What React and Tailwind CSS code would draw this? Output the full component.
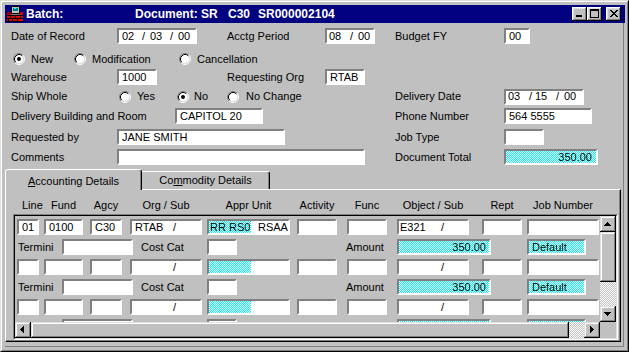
import React from "react";

const RAISED =
  "bg-[#c0c0c0] shadow-[inset_-1px_-1px_0_#000,inset_1px_1px_0_#dfdfdf,inset_-2px_-2px_0_#808080,inset_2px_2px_0_#fff]";
const CAPBTN =
  "bg-[#c0c0c0] shadow-[inset_-1px_-1px_0_#000,inset_1px_1px_0_#fff,inset_-2px_-2px_0_#808080,inset_2px_2px_0_#dfdfdf]";
const DITHER =
  "bg-[image:repeating-conic-gradient(#00ffff_0_25%,#ffffff_0_50%)] bg-[length:2px_2px] bg-fixed";
const TRACK =
  "bg-[image:repeating-conic-gradient(#c0c0c0_0_25%,#ffffff_0_50%)] bg-[length:2px_2px] bg-fixed";

function Field({ className = "", inner = "", dither = false, children }) {
  return (
    <div
      className={`shrink-0 h-[16px] border-2 border-t-[#808080] border-l-[#808080] border-r-white border-b-white overflow-hidden ${
        dither ? DITHER : "bg-white"
      } ${className}`}
    >
      <div className={`flex items-center w-full h-full whitespace-pre ${inner}`}>{children}</div>
    </div>
  );
}

function Radio({ checked }) {
  return (
    <svg width="12" height="12" viewBox="0 0 12 12" className="shrink-0">
      <circle cx="6" cy="6" r="4.5" fill="#fff" />
      <path d="M2.11 9.89A5.5 5.5 0 0 1 9.89 2.11" fill="none" stroke="#808080" />
      <path d="M9.89 2.11A5.5 5.5 0 0 1 2.11 9.89" fill="none" stroke="#fff" />
      <path d="M2.82 9.18A4.5 4.5 0 0 1 9.18 2.82" fill="none" stroke="#000" />
      <path d="M9.18 2.82A4.5 4.5 0 0 1 2.82 9.18" fill="none" stroke="#dfdfdf" />
      {checked && <circle cx="6" cy="6" r="2" fill="#000" />}
    </svg>
  );
}

function Arrow({ dir }) {
  const r = {
    up: [[7, 6, 1, 1], [6, 7, 3, 1], [5, 8, 5, 1], [4, 9, 7, 1]],
    down: [[4, 6, 7, 1], [5, 7, 5, 1], [6, 8, 3, 1], [7, 9, 1, 1]],
    left: [[5, 7, 1, 1], [6, 6, 1, 3], [7, 5, 1, 5], [8, 4, 1, 7]],
    right: [[6, 4, 1, 7], [7, 5, 1, 5], [8, 6, 1, 3], [9, 7, 1, 1]],
  }[dir];
  return (
    <svg width="16" height="16" viewBox="0 0 16 16" shapeRendering="crispEdges">
      {r.map(([x, y, w, h], i) => (
        <rect key={i} x={x} y={y} width={w} height={h} fill="#000" />
      ))}
    </svg>
  );
}

function ScrollBtn({ dir }) {
  return (
    <div className={`w-[16px] h-[16px] shrink-0 ${RAISED}`}>
      <Arrow dir={dir} />
    </div>
  );
}

function AppIcon() {
  return (
    <svg width="16" height="16" viewBox="0 0 16 16" shapeRendering="crispEdges">
      <rect x="0" y="6" width="16" height="10" fill="#e00000" />
      <rect x="0" y="6" width="5" height="2" fill="#800000" />
      <rect x="0" y="9" width="16" height="1" fill="#000" />
      <rect x="0" y="12" width="16" height="1" fill="#000" />
      <rect x="0" y="15" width="16" height="1" fill="#000" />
      <rect x="3" y="10" width="1" height="2" fill="#000" />
      <rect x="8" y="10" width="1" height="2" fill="#000" />
      <rect x="13" y="10" width="1" height="2" fill="#000" />
      <rect x="5" y="13" width="1" height="2" fill="#000" />
      <rect x="10" y="13" width="1" height="2" fill="#000" />
      <rect x="1" y="13" width="1" height="2" fill="#000" />
      <rect x="4" y="0" width="9" height="8" fill="#000" />
      <rect x="5" y="1" width="7" height="6" fill="#c0c0c0" />
      <rect x="6" y="2" width="5" height="3" fill="#008080" />
      <rect x="7" y="2" width="2" height="1" fill="#00ffff" />
      <rect x="5" y="8" width="7" height="1" fill="#808080" />
    </svg>
  );
}

function CloseGlyph() {
  const rows = [
    [[0, 2], [6, 2]],
    [[1, 2], [5, 2]],
    [[2, 4]],
    [[3, 2]],
    [[2, 4]],
    [[1, 2], [5, 2]],
    [[0, 2], [6, 2]],
  ];
  return (
    <svg width="8" height="7" viewBox="0 0 8 7" shapeRendering="crispEdges">
      {rows.map((segs, y) =>
        segs.map(([x, w], i) => (
          <rect key={`${y}-${i}`} x={x} y={y} width={w} height="1" fill="#000" />
        ))
      )}
    </svg>
  );
}

function TitleBar() {
  return (
    <div className="h-[18px] shrink-0 bg-[#000080] flex items-center text-white font-bold text-[12px] leading-[14px]">
      <div className="w-[21px] pl-[2px] flex items-center shrink-0">
        <AppIcon />
      </div>
      <span className="w-[109px] shrink-0">Batch:</span>
      <span className="w-[93px] shrink-0">Document: SR</span>
      <span className="w-[30px] shrink-0">C30</span>
      <span>SR000002104</span>
      <div className="ml-auto flex items-center mr-[4px]">
        <div className={`w-[15px] h-[14px] relative ${CAPBTN}`}>
          <div className="absolute left-[4px] top-[8px] w-[6px] h-[2px] bg-black" />
        </div>
        <div className={`w-[15px] h-[14px] relative ${CAPBTN}`}>
          <div className="absolute left-[3px] top-[2px] w-[9px] h-[9px] border border-black border-t-2" />
        </div>
        <div className="w-[4px]" />
        <div className={`w-[15px] h-[14px] flex items-start pl-[4px] pt-[3px] ${CAPBTN}`}>
          <CloseGlyph />
        </div>
      </div>
    </div>
  );
}

function DataRow({ line = "", fund = "", agcy = "", org = "", appr1 = "", appr2 = "", obj = "" }) {
  return (
    <div className="flex h-[16px] shrink-0">
      <Field className="w-[22px]"><span className="pl-[3px]">{line}</span></Field>
      <Field className="ml-[5px] w-[39px]"><span className="pl-[3px]">{fund}</span></Field>
      <Field className="ml-[7px] w-[32px]"><span className="pl-[3px]">{agcy}</span></Field>
      <Field className="ml-[8px] w-[72px]">
        <span className="w-[41px] shrink-0 pl-[3px]">{org}</span>
        <span>/</span>
      </Field>
      <Field className="ml-[5px] w-[83px]" inner="items-stretch">
        <span className={`w-[42px] shrink-0 flex items-center pl-[1px] ${DITHER}`}>{appr1}</span>
        <span className="flex items-center pl-[7px]">{appr2}</span>
      </Field>
      <Field className="ml-[7px] w-[40px]" />
      <Field className="ml-[10px] w-[40px]" />
      <Field className="ml-[10px] w-[72px]">
        <span className="w-[42px] shrink-0 pl-[1px]">{obj}</span>
        <span>/</span>
      </Field>
      <Field className="ml-[13px] w-[40px]" />
      <Field className="ml-[5px] w-[72px]" />
    </div>
  );
}

function TerminiRow({ labels = true }) {
  return (
    <div className="flex h-[16px] shrink-0 items-center">
      <span className="w-[45px] shrink-0 pl-[1px]">{labels ? "Termini" : ""}</span>
      <Field className="w-[71px]" />
      <span className="w-[74px] shrink-0 pl-[8px]">{labels ? "Cost Cat" : ""}</span>
      <Field className="w-[30px]" />
      <span className="w-[160px] shrink-0 pl-[109px]">{labels ? "Amount" : ""}</span>
      <Field dither className="w-[94px]" inner="justify-end">
        <span className="pr-[3px]">{labels ? "350.00" : ""}</span>
      </Field>
      <span className="w-[36px] shrink-0" />
      <Field dither className="w-[59px]">
        <span className="pl-[3px]">{labels ? "Default" : ""}</span>
      </Field>
    </div>
  );
}

function Grid() {
  return (
    <div className="ml-[7px] mt-[1px] w-[605px] h-[126px] shrink-0 border border-t-[#808080] border-l-[#808080] border-r-white border-b-white">
      <div className="w-full h-full border border-t-black border-l-black border-r-[#dfdfdf] border-b-[#dfdfdf] flex flex-col">
        <div className="flex h-[106px] shrink-0">
          <div className="w-[585px] h-full overflow-hidden flex flex-col gap-[4px] pt-[3px] pl-[2px]">
            <DataRow line="01" fund="0100" agcy="C30" org="RTAB" appr1="RR RS0" appr2="RSAA" obj="E321" />
            <TerminiRow />
            <DataRow />
            <TerminiRow />
            <DataRow />
            <TerminiRow labels={false} />
          </div>
          <div className="w-[16px] h-full flex flex-col">
            <ScrollBtn dir="up" />
            <div className={`h-[50px] shrink-0 ${RAISED}`} />
            <div className={`flex-1 ${TRACK}`} />
            <ScrollBtn dir="down" />
          </div>
        </div>
        <div className="flex h-[16px] shrink-0">
          <div className="w-[585px] flex">
            <ScrollBtn dir="left" />
            <div className={`w-[538px] h-[16px] shrink-0 ${RAISED}`} />
            <div className={`flex-1 ${TRACK}`} />
            <ScrollBtn dir="right" />
          </div>
          <div className="w-[16px] h-[16px] bg-[#c0c0c0]" />
        </div>
      </div>
    </div>
  );
}

function Header() {
  return (
    <div className="flex h-[16px] mt-[7px] pl-[11px] items-center shrink-0">
      <div className="w-[22px] shrink-0 pl-[5px] whitespace-nowrap">Line</div>
      <div className="ml-[5px] w-[39px] shrink-0 text-center">Fund</div>
      <div className="ml-[7px] w-[32px] shrink-0 text-center">Agcy</div>
      <div className="ml-[8px] w-[72px] shrink-0 text-center whitespace-pre">Org / Sub</div>
      <div className="ml-[5px] w-[83px] shrink-0 text-center">Appr Unit</div>
      <div className="ml-[7px] w-[40px] shrink-0 text-center">Activity</div>
      <div className="ml-[10px] w-[40px] shrink-0 text-center">Func</div>
      <div className="ml-[10px] w-[72px] shrink-0 text-center whitespace-pre">Object / Sub</div>
      <div className="ml-[13px] w-[40px] shrink-0 text-center">Rept</div>
      <div className="ml-[5px] w-[72px] shrink-0 text-center whitespace-nowrap">Job Number</div>
    </div>
  );
}

export default function App() {
  return (
    <div className="relative w-[629px] h-[352px] overflow-hidden bg-[#c0c0c0] border border-t-[#dfdfdf] border-l-[#dfdfdf] border-r-black border-b-black font-['Liberation_Sans',Arial,sans-serif] text-[11px] leading-[13px] text-black">
      <div className="w-full h-full border border-t-white border-l-white border-r-[#808080] border-b-[#808080] pt-[3px] pl-[3px] pr-[2px] pb-[2px] flex flex-col">
        <TitleBar />
        <div className="w-[619px] h-[324px] shrink-0 border-r border-b border-[#808080] flex flex-col">
          {/* Row 1 */}
          <div className="flex items-center h-[16px] mt-[5px] pl-[6px] shrink-0">
            <span className="w-[106px] shrink-0">Date of Record</span>
            <Field className="w-[80px]">
              <span className="w-[23px] shrink-0 pl-[3px]">02</span>
              <span className="w-[8px] shrink-0">/</span>
              <span className="w-[20px] shrink-0">03</span>
              <span className="w-[8px] shrink-0">/</span>
              <span>00</span>
            </Field>
            <span className="ml-[30px] w-[98px] shrink-0">Acctg Period</span>
            <Field className="w-[50px]">
              <span className="w-[23px] shrink-0 pl-[2px]">08</span>
              <span className="w-[8px] shrink-0">/</span>
              <span>00</span>
            </Field>
            <span className="ml-[20px] w-[109px] shrink-0">Budget FY</span>
            <Field className="w-[26px]">
              <span className="pl-[3px]">00</span>
            </Field>
          </div>
          {/* Row 2 */}
          <div className="flex items-center h-[12px] mt-[9px] pl-[8px] shrink-0">
            <div className="w-[61px] shrink-0 flex items-center gap-[6px]">
              <Radio checked />
              <span>New</span>
            </div>
            <div className="w-[105px] shrink-0 flex items-center gap-[6px]">
              <Radio />
              <span>Modification</span>
            </div>
            <div className="flex items-center gap-[6px]">
              <Radio />
              <span>Cancellation</span>
            </div>
          </div>
          {/* Row 3 */}
          <div className="flex items-center h-[16px] mt-[4px] pl-[6px] shrink-0">
            <span className="w-[106px] shrink-0">Warehouse</span>
            <Field className="w-[40px]">
              <span className="pl-[3px]">1000</span>
            </Field>
            <span className="ml-[70px] w-[98px] shrink-0">Requesting Org</span>
            <Field className="w-[40px]">
              <span className="pl-[3px]">RTAB</span>
            </Field>
          </div>
          {/* Row 4 */}
          <div className="flex items-center h-[17px] mt-[3px] pl-[6px] shrink-0">
            <span className="w-[108px] shrink-0">Ship Whole</span>
            <div className="w-[58px] shrink-0 flex items-center gap-[6px]">
              <Radio />
              <span>Yes</span>
            </div>
            <div className="w-[50px] shrink-0 flex items-center gap-[5px]">
              <Radio checked />
              <span>No</span>
            </div>
            <div className="w-[168px] shrink-0 flex items-center gap-[7px]">
              <Radio />
              <span>No Change</span>
            </div>
            <span className="w-[109px] shrink-0">Delivery Date</span>
            <Field className="w-[80px]">
              <span className="w-[23px] shrink-0 pl-[2px]">03</span>
              <span className="w-[6px] shrink-0">/</span>
              <span className="w-[21px] shrink-0">15</span>
              <span className="w-[8px] shrink-0">/</span>
              <span>00</span>
            </Field>
          </div>
          {/* Row 5 */}
          <div className="flex items-center h-[16px] mt-[3px] pl-[6px] shrink-0">
            <span className="w-[164px] shrink-0">Delivery Building and Room</span>
            <Field className="w-[88px]">
              <span className="pl-[3px]">CAPITOL 20</span>
            </Field>
            <span className="ml-[132px] w-[109px] shrink-0">Phone Number</span>
            <Field className="w-[88px]">
              <span className="pl-[3px]">564 5555</span>
            </Field>
          </div>
          {/* Row 6 */}
          <div className="flex items-center h-[16px] mt-[5px] pl-[6px] shrink-0">
            <span className="w-[106px] shrink-0">Requested by</span>
            <Field className="w-[168px]">
              <span className="pl-[3px]">JANE SMITH</span>
            </Field>
            <span className="ml-[110px] w-[109px] shrink-0">Job Type</span>
            <Field className="w-[40px]" />
          </div>
          {/* Row 7 */}
          <div className="flex items-center h-[16px] mt-[4px] pl-[6px] shrink-0">
            <span className="w-[106px] shrink-0">Comments</span>
            <Field className="w-[248px]" />
            <span className="ml-[30px] w-[109px] shrink-0">Document Total</span>
            <Field dither className="w-[94px]" inner="justify-end">
              <span className="pr-[4px]">350.00</span>
            </Field>
          </div>
          {/* Tabs */}
          <div className="flex h-[20px] mt-[4px] items-start relative z-10 shrink-0">
            <div className="w-[137px] h-[21px] shrink-0 bg-[#c0c0c0] border-t border-l border-r border-t-white border-l-white border-r-black rounded-t-[3px] shadow-[inset_-1px_0_0_#808080] flex items-center justify-center pt-[2px]">
              <span>
                <span className="underline">A</span>ccounting Details
              </span>
            </div>
            <div className="w-[128px] h-[18px] mt-[2px] shrink-0 border-t border-r border-t-white border-r-black rounded-tr-[3px] shadow-[inset_-1px_0_0_#808080] flex items-center justify-center">
              <span>
                Co<span className="underline">m</span>modity Details
              </span>
            </div>
          </div>
          {/* Panel */}
          <div className="relative w-[616px] h-[153px] shrink-0 border border-t-white border-l-white border-r-black border-b-black shadow-[inset_-1px_-1px_0_#808080] flex flex-col">
            <Header />
            <Grid />
          </div>
        </div>
      </div>
    </div>
  );
}
